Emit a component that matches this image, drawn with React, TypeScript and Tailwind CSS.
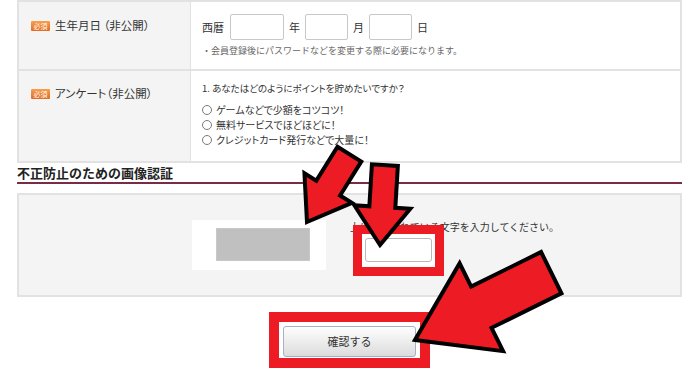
import React from "react";

// red annotation arrow: pointing along +x, tip at origin
function Arrow({ x, y, angle, len, head, headW, shaftW }: {
  x: number; y: number; angle: number; len: number; head: number; headW: number; shaftW: number;
}) {
  const pts = [
    [0, 0],
    [-head, -headW],
    [-head, -shaftW],
    [-len, -shaftW],
    [-len, shaftW],
    [-head, shaftW],
    [-head, headW],
  ]
    .map((p) => p.join(","))
    .join(" ");
  return (
    <polygon
      points={pts}
      transform={`translate(${x} ${y}) rotate(${angle})`}
      fill="#ed1c24"
      stroke="#000"
      strokeWidth={4}
      strokeLinejoin="miter"
    />
  );
}

function Badge() {
  return (
    <span className="inline-flex items-center justify-center w-[19px] h-[10px] rounded-[1px] bg-gradient-to-b from-[#f7a04e] to-[#e4681a] text-white text-[7px] leading-none mr-[5px]">
      必須
    </span>
  );
}

function Radio({ label }: { label: string }) {
  return (
    <div className="flex items-center h-[15px]">
      <span className="w-[10px] h-[10px] rounded-full border border-[#7a7a7a] bg-white mr-[4px]" />
      <span className="text-[10px] [font-feature-settings:'palt']">{label}</span>
    </div>
  );
}

export default function App() {
  return (
    <div className="relative w-[700px] h-[385px] overflow-hidden bg-white text-[#333] font-['Noto_Sans_CJK_JP','Noto_Sans',sans-serif]">
      <div className="ml-[17px] w-[665px]">
        {/* form table */}
        <div className="border-2 border-[#e2e2e2]">
          <div className="flex h-[69px] border-b-2 border-[#e2e2e2]">
            <div className="w-[172px] bg-[#f4f4f4] border-r border-[#e2e2e2] pl-[12px] pt-[16px]">
              <div className="flex items-center h-[16px] text-[11.5px] [font-feature-settings:'palt']">
                <Badge />
                生年月日 （非公開）
              </div>
            </div>
            <div className="flex-1 pl-[11px] pt-[12px]">
              <div className="flex items-center text-[11px]">
                <span className="mr-[6px]">西暦</span>
                <span className="w-[54px] h-[26px] border border-[#c8c8c8] rounded-[2px] bg-white" />
                <span className="mx-[5px]">年</span>
                <span className="w-[43px] h-[26px] border border-[#c8c8c8] rounded-[2px] bg-white" />
                <span className="mx-[5px]">月</span>
                <span className="w-[43px] h-[26px] border border-[#c8c8c8] rounded-[2px] bg-white" />
                <span className="ml-[5px]">日</span>
              </div>
              <div className="mt-[4px] text-[9px] leading-[13px] text-[#666]">
                ・会員登録後にパスワードなどを変更する際に必要になります。
              </div>
            </div>
          </div>
          <div className="flex h-[90px]">
            <div className="w-[172px] bg-[#f4f4f4] border-r border-[#e2e2e2] pl-[12px] pt-[15px]">
              <div className="flex items-center h-[16px] text-[11.5px] [font-feature-settings:'palt']">
                <Badge />
                アンケート（非公開）
              </div>
            </div>
            <div className="flex-1 pl-[11px] pt-[11px]">
              <div className="text-[9.5px] leading-[13px] [font-feature-settings:'palt']">1. あなたはどのようにポイントを貯めたいですか？</div>
              <div className="mt-[7px]">
                <Radio label="ゲームなどで少額をコツコツ！" />
                <Radio label="無料サービスでほどほどに！" />
                <Radio label="クレジットカード発行などで大量に！" />
              </div>
            </div>
          </div>
        </div>

        {/* captcha */}
        <h2 className="mt-[2px] pb-[1px] border-b-2 border-[#7a2c44] text-[13px] leading-[16px] font-bold text-[#222]">
          不正防止のための画像認証
        </h2>
        <div className="mt-[9px] h-[104px] border-2 border-[#e2e2e2] bg-[#f4f4f4] flex items-start pt-[25px] pl-[173px]">
          <div className="bg-white pl-[24px] pr-[16px] pt-[8px] pb-[9px]">
            <div className="w-[94px] h-[33px] bg-[#c0c0c0] border border-[#c8c8c8]" />
          </div>
          <div className="ml-[24px]">
            <div className="text-[10px] leading-[14px] whitespace-nowrap">上に表示されている文字を入力してください。</div>
            <div className="relative ml-[15px] mt-[4px] w-[67px] h-[24px]">
              <div className="absolute -left-[12px] -right-[12px] -top-[13px] -bottom-[14px] border-[9px] border-[#ed1c24] bg-white" />
              <div className="relative w-full h-full rounded-[3px] border border-[#b9b9b9] bg-white" />
            </div>
          </div>
        </div>

        {/* submit */}
        <div className="flex justify-center mt-[29px]">
          <div className="relative">
            <div className="absolute -left-[14px] -right-[14px] -top-[14px] -bottom-[11px] border-[10px] border-[#ed1c24]" />
            <button className="relative w-[133px] h-[31px] rounded-[3px] border border-[#a3b1c7] bg-gradient-to-b from-[#fefefe] to-[#dcdcdc] text-[11px] text-[#333]">
              確認する
            </button>
          </div>
        </div>
      </div>

      {/* annotation arrows */}
      <svg className="absolute inset-0 pointer-events-none" width={700} height={385}>
        <Arrow x={307} y={222} angle={122} len={80} head={40} headW={28} shaftW={14} />
        <Arrow x={380} y={245} angle={93.5} len={80} head={38} headW={28} shaftW={13} />
        <Arrow x={415} y={340} angle={153.7} len={152} head={74} headW={49} shaftW={23} />
      </svg>
    </div>
  );
}
